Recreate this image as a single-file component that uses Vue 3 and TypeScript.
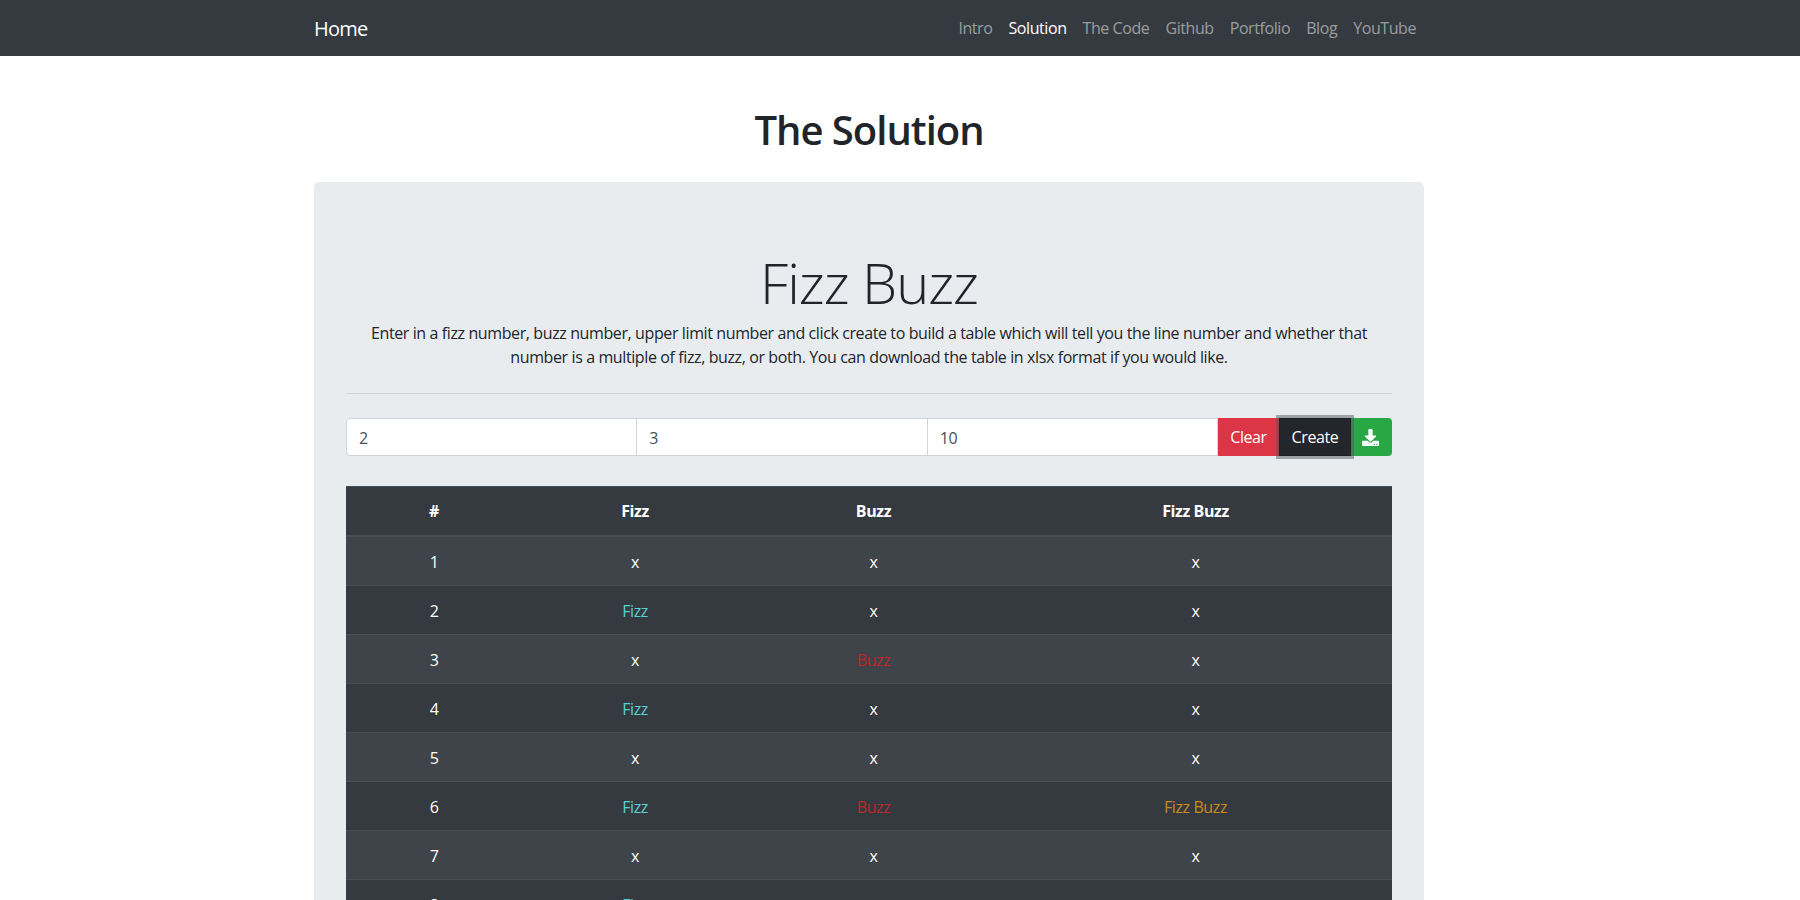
<script setup lang="ts">
import { ref, computed } from "vue";

const fizz = ref(2);
const buzz = ref(3);
const limit = ref(10);

const links = ["Intro", "Solution", "The Code", "Github", "Portfolio", "Blog", "YouTube"];

const rows = computed(() => {
  const out = [];
  for (let i = 1; i <= limit.value; i++) {
    const f = i % fizz.value === 0;
    const b = i % buzz.value === 0;
    out.push({ n: i, f, b });
  }
  return out;
});
</script>

<template>
  <nav class="navbar">
    <div class="nav-inner">
      <a class="brand" href="#">Home</a>
      <ul class="links">
        <li v-for="l in links" :key="l" :class="{ active: l === 'Solution' }">{{ l }}</li>
      </ul>
    </div>
  </nav>
  <main class="page">
    <h1 class="title">The Solution</h1>
    <section class="jumbotron">
      <h2 class="display">Fizz Buzz</h2>
      <p class="lead">
        Enter in a fizz number, buzz number, upper limit number and click create to build a table which will tell you the line number and whether that number is a multiple of fizz, buzz, or both. You can download the table in xlsx format if you would like.
      </p>
      <hr />
      <div class="input-group">
        <input v-model.number="fizz" type="text" />
        <input v-model.number="buzz" type="text" />
        <input v-model.number="limit" type="text" />
        <button class="btn clear">Clear</button>
        <button class="btn create">Create</button>
        <button class="btn download" aria-label="Download">
          <svg viewBox="0 0 512 512" width="17" height="17">
            <path fill="currentColor" d="M216 0h80c13.3 0 24 10.7 24 24v168h87.7c17.8 0 26.7 21.5 14.1 34.1L269.7 378.3c-7.5 7.5-19.8 7.5-27.3 0L90.1 226.1c-12.6-12.6-3.7-34.1 14.1-34.1H192V24c0-13.3 10.7-24 24-24zm296 376v112c0 13.3-10.7 24-24 24H24c-13.3 0-24-10.7-24-24V376c0-13.3 10.7-24 24-24h146.7l49 49c20.1 20.1 52.5 20.1 72.6 0l49-49H488c13.3 0 24 10.7 24 24zm-124 88c0-11-9-20-20-20s-20 9-20 20 9 20 20 20 20-9 20-20zm64 0c0-11-9-20-20-20s-20 9-20 20 9 20 20 20 20-9 20-20z" />
          </svg>
        </button>
      </div>
      <table class="results">
        <colgroup>
          <col style="width: 176px" />
          <col style="width: 226px" />
          <col style="width: 251px" />
          <col />
        </colgroup>
        <thead>
          <tr>
            <th>#</th>
            <th>Fizz</th>
            <th>Buzz</th>
            <th>Fizz Buzz</th>
          </tr>
        </thead>
        <tbody>
          <tr v-for="r in rows" :key="r.n">
            <td>{{ r.n }}</td>
            <td :class="{ fizz: r.f }">{{ r.f ? "Fizz" : "x" }}</td>
            <td :class="{ buzz: r.b }">{{ r.b ? "Buzz" : "x" }}</td>
            <td :class="{ both: r.f && r.b }">{{ r.f && r.b ? "Fizz Buzz" : "x" }}</td>
          </tr>
        </tbody>
      </table>
    </section>
  </main>
</template>

<style>
html {
  overflow: hidden;
}
body {
  font-family: "Open Sans", "Noto Sans", sans-serif;
  font-size: 16px;
  line-height: 1.5;
  color: #212529;
  background: #fff;
}
</style>

<style scoped>
.navbar {
  background: #343a40;
  height: 56px;
}
.nav-inner {
  width: 1110px;
  margin-left: 314px;
  height: 100%;
  display: flex;
  align-items: center;
  justify-content: space-between;
}
.brand {
  color: #fff;
  font-size: 20px;
  text-decoration: none;
  letter-spacing: -0.75px;
  padding-top: 2px;
}
.links {
  display: flex;
  list-style: none;
  margin: 0;
  padding: 0;
}
.links li {
  padding: 8px;
  color: rgba(255, 255, 255, 0.5);
  letter-spacing: -0.42px;
}
.links li.active {
  color: #fff;
}
.page {
  width: 1110px;
  margin-left: 314px;
  padding-top: 50px;
}
.title {
  margin: 0 0 28px;
  font-size: 40px;
  line-height: 48px;
  font-weight: 600;
  text-align: center;
  letter-spacing: -1px;
}
.jumbotron {
  background: #e9ecef;
  border-radius: 4.8px;
  padding: 64px 32px;
}
.display {
  margin: 0 0 5px;
  padding-top: 3px;
  font-size: 56px;
  font-weight: 300;
  line-height: 67px;
  text-align: center;
  letter-spacing: -1px;
}
.lead {
  margin: 0;
  text-align: center;
  letter-spacing: -0.39px;
  padding: 0 8px;
}
hr {
  margin: 24px 0;
  border: 0;
  border-top: 1px solid rgba(0, 0, 0, 0.1);
}
.input-group {
  display: flex;
  height: 38px;
}
.input-group input {
  flex: 1 1 0;
  min-width: 0;
  margin: 0 -1px 0 0;
  padding: 7px 12px 5px;
  border: 1px solid #ced4da;
  background: #fff;
  color: #495057;
  font: inherit;
  letter-spacing: -0.3px;
  outline: none;
}
.input-group input:first-child {
  border-radius: 4px 0 0 4px;
}
.btn {
  border: 1px solid transparent;
  padding: 6px 0;
  color: #fff;
  font: inherit;
  letter-spacing: -0.4px;
  display: flex;
  align-items: center;
  justify-content: center;
}
.clear {
  background: #dc3545;
  width: 61px;
  margin-left: 1px;
}
.create {
  background: #23272b;
  border-color: #1d2124;
  width: 72px;
  box-shadow: 0 0 0 3px rgba(82, 88, 93, 0.5);
  position: relative;
  z-index: 1;
}
.download {
  background: #28a745;
  width: 41px;
  padding-right: 2px;
  border-radius: 0 4px 4px 0;
}
.results {
  width: 100%;
  margin-top: 30px;
  border-collapse: collapse;
  table-layout: fixed;
  background: #343a40;
  color: #fff;
  text-align: center;
}
.results th,
.results td {
  padding: 13px 12px 11px;
  border-top: 1px solid #454d55;
  letter-spacing: -0.4px;
}
.results th {
  padding: 12px;
  font-weight: 700;
  border-bottom: 2px solid #454d55;
}
.results tbody tr:nth-child(odd) {
  background: rgba(255, 255, 255, 0.05);
}
.results .fizz {
  color: #58d0d2;
}
.results .buzz {
  color: #bf2626;
}
.results .both {
  color: #c98a1c;
}
</style>
